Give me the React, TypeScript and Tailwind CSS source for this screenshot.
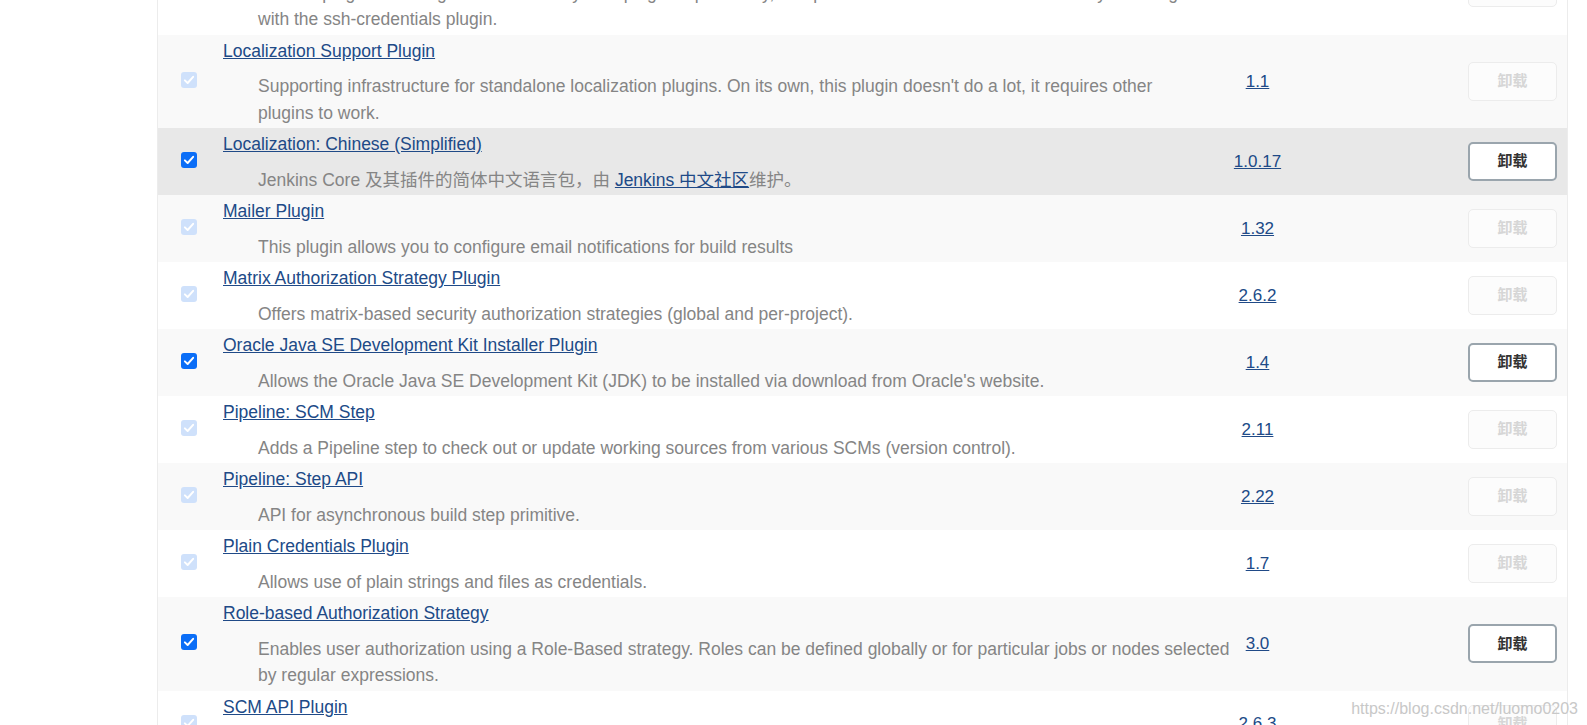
import React from "react";

type Plugin = {
  name: string;
  desc: React.ReactNode[];
  version: string;
  active?: boolean;
};

const plugins: Plugin[] = [
  {
    name: "JSch dependency plugin",
    desc: [
      "Jenkins plugin that brings the JSch library as a plugin dependency, and provides an SSHAuthenticatorFactory for using JSch",
      "with the ssh-credentials plugin.",
    ],
    version: "0.1.55.2",
  },
  {
    name: "Localization Support Plugin",
    desc: [
      "Supporting infrastructure for standalone localization plugins. On its own, this plugin doesn't do a lot, it requires other",
      "plugins to work.",
    ],
    version: "1.1",
  },
  {
    name: "Localization: Chinese (Simplified)",
    desc: [
      <>
        Jenkins Core 及其插件的简体中文语言包，由{" "}
        <a href="#" className="text-[#204a87] underline">
          Jenkins 中文社区
        </a>
        维护。
      </>,
    ],
    version: "1.0.17",
    active: true,
  },
  {
    name: "Mailer Plugin",
    desc: ["This plugin allows you to configure email notifications for build results"],
    version: "1.32",
  },
  {
    name: "Matrix Authorization Strategy Plugin",
    desc: ["Offers matrix-based security authorization strategies (global and per-project)."],
    version: "2.6.2",
  },
  {
    name: "Oracle Java SE Development Kit Installer Plugin",
    desc: ["Allows the Oracle Java SE Development Kit (JDK) to be installed via download from Oracle's website."],
    version: "1.4",
    active: true,
  },
  {
    name: "Pipeline: SCM Step",
    desc: ["Adds a Pipeline step to check out or update working sources from various SCMs (version control)."],
    version: "2.11",
  },
  {
    name: "Pipeline: Step API",
    desc: ["API for asynchronous build step primitive."],
    version: "2.22",
  },
  {
    name: "Plain Credentials Plugin",
    desc: ["Allows use of plain strings and files as credentials."],
    version: "1.7",
  },
  {
    name: "Role-based Authorization Strategy",
    desc: [
      "Enables user authorization using a Role-Based strategy. Roles can be defined globally or for particular jobs or nodes selected",
      "by regular expressions.",
    ],
    version: "3.0",
    active: true,
  },
  {
    name: "SCM API Plugin",
    desc: ["This plugin provides a new enhanced API for interacting with SCM systems."],
    version: "2.6.3",
  },
];

// chrome-style checked box; dependencies show the pale disabled one
function CheckBox({ active }: { active?: boolean }) {
  return (
    <span
      className={`flex items-center justify-center w-4 h-4 rounded-[3px] -mt-[3px] ${
        active ? "bg-[#0b6ef7]" : "bg-[#cfe1fb]"
      }`}
    >
      <svg viewBox="0 0 16 16" className="w-[12px] h-[12px]">
        <path
          d="M2.5 8.5 L6.2 12 L13.5 3.8"
          fill="none"
          stroke="white"
          strokeWidth="2.6"
          strokeLinecap="round"
          strokeLinejoin="round"
        />
      </svg>
    </span>
  );
}

export default function App() {
  return (
    <div className="relative h-[725px] overflow-hidden bg-white font-['Liberation_Sans','Noto_Sans_CJK_SC',sans-serif] text-[17.5px]">
      <div className="ml-[157px] w-[1411px] border-x border-[#ececec] -mt-[59px]">
        {plugins.map((p, i) => {
          // row 2 is under the mouse in the screenshot
          const bg = i === 2 ? "bg-[#e8e8e8]" : i % 2 === 1 ? "bg-[#f9f9f9]" : "bg-white";
          return (
            <div
              key={p.name}
              className={`grid grid-cols-[62px_1004px_67px_1fr] items-center ${bg}`}
            >
              <div className="flex justify-center">
                <CheckBox active={p.active} />
              </div>

              <div className="pl-[3px] pt-[3px] pb-[2px]">
                <a href="#" className="block leading-[26.5px] text-[#204a87] underline whitespace-nowrap">
                  {p.name}
                </a>
                <div className="mt-[9px] pl-[35px] text-[#858585] leading-[26.5px]">
                  {p.desc.map((line, j) => (
                    <div key={j} className="whitespace-nowrap">
                      {line}
                    </div>
                  ))}
                </div>
              </div>

              <div className="text-center text-[17px]">
                <a href="#" className="text-[#204a87] underline">
                  {p.version}
                </a>
              </div>

              <div className="flex justify-end pr-[10px]">
                {p.active ? (
                  <button className="w-[89px] h-[39px] rounded-[5px] border-2 border-[#9aa5ad] bg-white text-[15px] font-bold text-[#333]">
                    卸载
                  </button>
                ) : (
                  <button
                    disabled
                    className="w-[89px] h-[39px] rounded-[5px] border border-[#ececec] bg-[#fcfcfc] text-[15px] font-bold text-[#d6d6d6]"
                  >
                    卸载
                  </button>
                )}
              </div>
            </div>
          );
        })}
      </div>

      {/* csdn watermark */}
      <div className="absolute right-[9px] top-[697px] text-[16px] text-[#c8c8c8] font-['Liberation_Sans',sans-serif]">
        https://blog.csdn.net/luomo0203
      </div>
    </div>
  );
}
